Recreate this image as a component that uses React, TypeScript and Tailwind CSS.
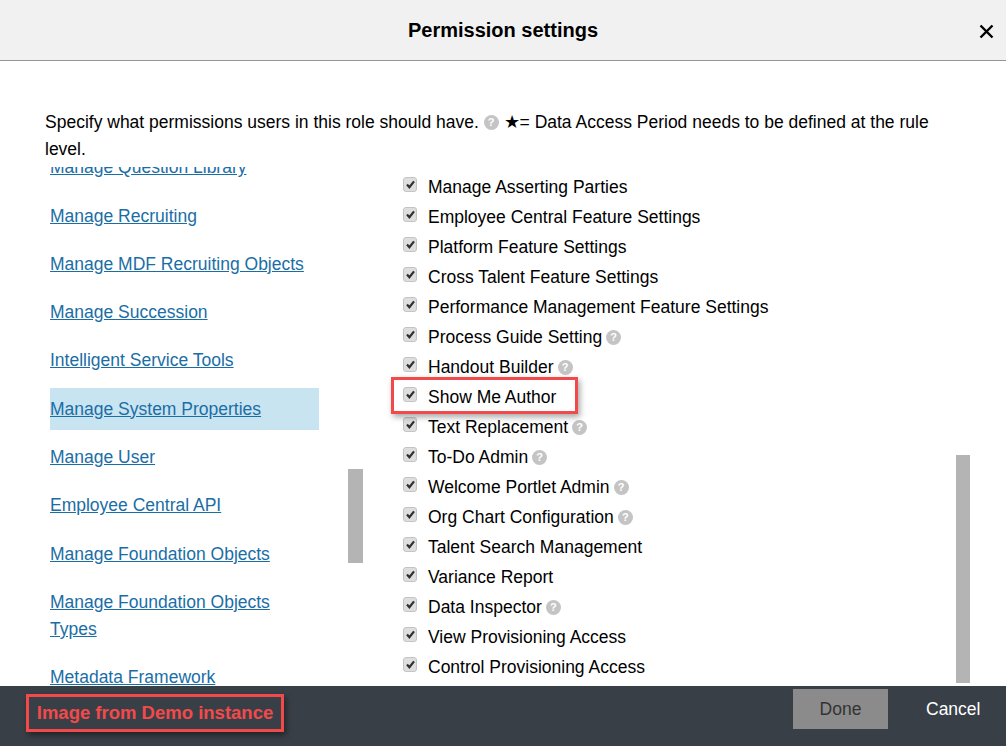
const leftLinks = [
  'Manage Question Library',
  'Manage Recruiting',
  'Manage MDF Recruiting Objects',
  'Manage Succession',
  'Intelligent Service Tools',
  'Manage System Properties',
  'Manage User',
  'Employee Central API',
  'Manage Foundation Objects',
  'Manage Foundation Objects Types',
  'Metadata Framework',
]

const permissions = [
  { label: 'Manage Asserting Parties' },
  { label: 'Employee Central Feature Settings' },
  { label: 'Platform Feature Settings' },
  { label: 'Cross Talent Feature Settings' },
  { label: 'Performance Management Feature Settings' },
  { label: 'Process Guide Setting', help: true },
  { label: 'Handout Builder', help: true },
  { label: 'Show Me Author' },
  { label: 'Text Replacement', help: true },
  { label: 'To-Do Admin', help: true },
  { label: 'Welcome Portlet Admin', help: true },
  { label: 'Org Chart Configuration', help: true },
  { label: 'Talent Search Management' },
  { label: 'Variance Report' },
  { label: 'Data Inspector', help: true },
  { label: 'View Provisioning Access' },
  { label: 'Control Provisioning Access' },
]

function Help() {
  return (
    <span className="inline-flex items-center justify-center w-[15px] h-[15px] rounded-full bg-[#c4c4c4] text-white text-[11px] font-bold leading-none align-[2px]">
      ?
    </span>
  )
}

function Check() {
  return (
    <span className="flex items-center justify-center w-[14px] h-[15px] rounded-[3px] bg-[#dedede] border border-[#c4c4c4]">
      <svg width="11" height="11" viewBox="0 0 11 11" fill="none">
        <path d="M2 5.6 L4.4 8.2 L9 2.4" stroke="#2f2f2f" strokeWidth="2.2" />
      </svg>
    </span>
  )
}

export default function App() {
  return (
    <div className="relative w-[1006px] h-[746px] overflow-hidden bg-white flex flex-col font-['Liberation_Sans',Arial,sans-serif] text-[17.5px] text-black">
      <div className="relative h-[61px] shrink-0 bg-[#f1f1f1] border-b border-[#959595] flex items-center justify-center">
        <h1 className="text-[20px] font-bold">Permission settings</h1>
        <button className="absolute right-[12px] top-[24px] text-black">
          <svg width="15" height="15" viewBox="0 0 15 15" fill="none">
            <path d="M1.5 1.5 L13.5 13.5 M13.5 1.5 L1.5 13.5" stroke="#000" strokeWidth="2.4" />
          </svg>
        </button>
      </div>

      <p className="shrink-0 pt-[48px] pl-[45px] pr-[60px] leading-[27px]">
        Specify what permissions users in this role should have. <Help /> ★= Data Access Period needs to be defined at the rule level.
      </p>

      <div className="flex-1 min-h-0 flex">
        <div className="relative w-[364px] shrink-0 mt-[4px] overflow-hidden pl-[50px]">
          <ul className="w-[269px] -mt-[20.3px]">
            {leftLinks.map(t => (
              <li key={t} className={`mb-[6.3px] py-[7.5px] leading-[27px] ${t === 'Manage System Properties' ? 'bg-[#c9e4f1]' : ''}`}>
                <a href="#" className="text-[#1a6ea6] underline">{t}</a>
              </li>
            ))}
          </ul>
          <div className="absolute left-[348px] top-[302px] w-[15px] h-[94px] bg-[#b4b4b4]" />
        </div>

        <div className="relative flex-1 overflow-hidden pl-[39px] pt-[9px]">
          {permissions.map(p => (
            <div key={p.label} className="h-[30px] flex items-center">
              <span className="-mt-[5px]"><Check /></span>
              <span className="ml-[11px]">{p.label}</span>
              {p.help && <span className="ml-[4px] flex"><Help /></span>}
            </div>
          ))}
          <div className="absolute left-[592px] top-[292px] w-[14px] h-[228px] bg-[#b4b4b4]" />
        </div>
      </div>

      <div className="relative h-[60px] shrink-0 bg-[#393f46] flex items-start justify-end">
        <button className="mt-[3px] w-[95px] h-[40px] bg-[#8b8b8b] text-[#333]">Done</button>
        <button className="mt-[3px] ml-[38px] mr-[26px] w-[54px] h-[40px] text-white">Cancel</button>
        <div className="absolute left-[26px] top-[8px] w-[258px] h-[38px] border-[3px] border-[#f24a4a] shadow-[2px_3px_6px_rgba(0,0,0,0.45)] flex items-center justify-center text-[#f24a4a] text-[18.5px] font-bold">
          Image from Demo instance
        </div>
      </div>

      <div className="absolute left-[391px] top-[377px] w-[187px] h-[37px] border-[3px] border-[#f24a4a] shadow-[2px_3px_6px_rgba(0,0,0,0.35)]" />
    </div>
  )
}
